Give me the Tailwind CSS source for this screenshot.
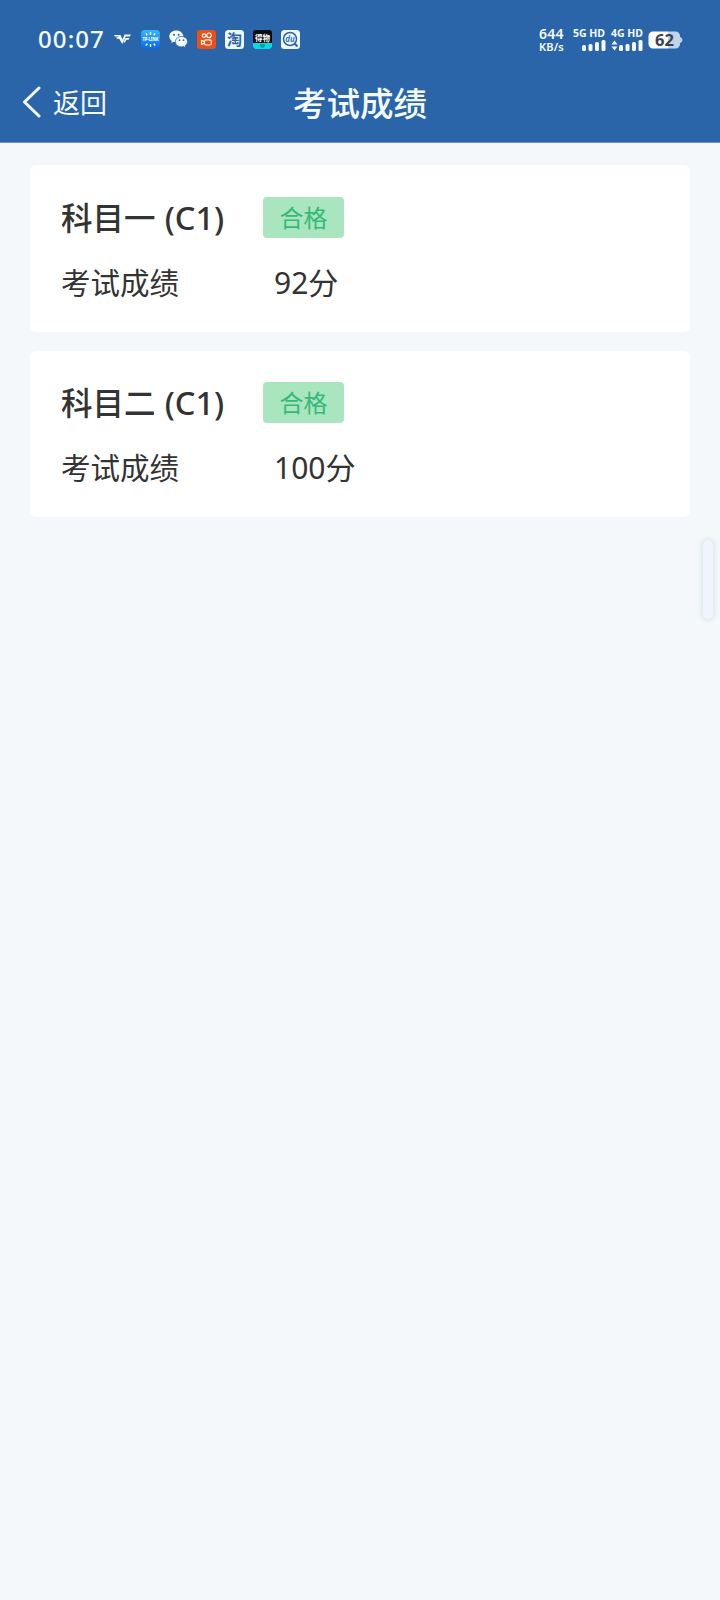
<!DOCTYPE html>
<html lang="zh-CN">
  <head>
    <meta charset="UTF-8" />
    <meta name="viewport" content="width=device-width, initial-scale=1.0" />
    <title>考试成绩</title>
    <script src="https://cdn.jsdelivr.net/npm/@tailwindcss/browser@4"></script>
  </head>
  <body
    class="min-h-screen bg-[#f4f8fa] font-['Noto_Sans','Noto_Sans_CJK_SC',sans-serif] text-[#333333]"
  >
    <!-- Header -->
    <header class="h-[143px] bg-[#2b65a9] text-[#f4fbff] border-b border-[#7093b5]">
      <!-- Status bar -->
      <div class="h-16 pt-[15px] pl-[37px] pr-[37px] flex justify-between">
        <div class="h-12 flex items-center">
          <span class="w-[68px] pl-px text-2xl font-medium tracking-[1.100px] whitespace-nowrap">00:07</span>
          <svg class="ml-[9px] w-[18px] h-3" viewBox="0 0 18 12" fill="currentColor">
            <path d="M0 2h6.500l2 4.500L10.500 1.500H17l-1.200 1.900h-4L8.200 11 5.200 5.700H3L2 4.200h2.500L4 3.500H1z" />
            <path d="M11.500 4.900h4l-1 1.800h-2.200L11 9.500H9.300z" />
          </svg>

          <div class="ml-[9px] flex gap-[9px]">
            <!-- TP-LINK -->
            <svg class="w-[19px] h-[19px] overflow-visible" viewBox="0 0 19 19">
              <defs>
                <linearGradient id="tp" x1="0" y1="0" x2="0" y2="1">
                  <stop offset="0" stop-color="#35b8fa" />
                  <stop offset="1" stop-color="#0865f0" />
                </linearGradient>
              </defs>
              <rect width="19" height="19" rx="4" fill="url(#tp)" />
              <path d="M9.500 2v3M9.500 14v3M4.800 3.500l1.500 1.800M14.200 3.500l-1.500 1.800M4.800 15.500l1.500-1.800M14.200 15.500l-1.500-1.800" stroke="#fff" stroke-width="1.400" />
              <text x="1.500" y="11.300" textLength="16" lengthAdjust="spacingAndGlyphs" font-size="4.800" font-weight="800" fill="#fff">TP-LINK</text>
            </svg>
            <!-- WeChat -->
            <svg class="w-[19px] h-[19px]" viewBox="0 0 19 19" fill="#f4fbff">
              <path d="M7.300.5C3.300.5.300 3.100.300 6.400c0 1.900 1 3.500 2.600 4.600L2.300 13l2.500-1.200c.8.200 1.600.4 2.500.4 4 0 7-2.600 7-5.800S11.300.5 7.300.5z" />
              <path d="M12.500 6.500c-3.400 0-6.100 2.300-6.100 5.200s2.700 5.200 6.100 5.200c.7 0 1.400-.1 2-.3l2.200 1.200-.6-1.900c1.500-1 2.500-2.500 2.500-4.200 0-2.900-2.700-5.200-6.100-5.200z" stroke="#2b65a9" stroke-width=".8" />
              <g fill="#2b65a9">
                <circle cx="5" cy="4.700" r="1" />
                <circle cx="9.600" cy="4.700" r="1" />
                <circle cx="10.500" cy="10.200" r=".9" />
                <circle cx="14.500" cy="10.200" r=".9" />
              </g>
            </svg>
            <!-- Kuaishou -->
            <svg class="w-[19px] h-[19px]" viewBox="0 0 19 19" fill="none" stroke="#fff" stroke-width="1.200">
              <rect width="19" height="19" rx="3" fill="#ef4f15" stroke="none" />
              <circle cx="7" cy="5.600" r="1.800" />
              <circle cx="12" cy="5.300" r="2.300" />
              <rect x="7.500" y="9.800" width="6.800" height="5.200" rx="1.500" />
              <path d="M7.500 11.800L4.500 10.300v4.200l3-1.500" stroke-linejoin="round" />
            </svg>
            <!-- Taobao -->
            <svg class="w-[19px] h-[19px] overflow-visible" viewBox="0 0 19 19">
              <rect width="19" height="19" rx="3.500" fill="#f0f8ff" />
              <text x="9.500" y="15" text-anchor="middle" font-size="15" font-weight="700" fill="#2b65a9">淘</text>
            </svg>
            <!-- Dewu -->
            <svg class="w-[19px] h-[19px] overflow-visible" viewBox="0 0 19 19">
              <rect width="19" height="19" rx="3" fill="#050b10" />
              <path d="M0 13h14l1-1.500L16 13h3v3a3 3 0 0 1-3 3H3a3 3 0 0 1-3-3z" fill="#08d9e5" />
              <text x="9.500" y="10.500" text-anchor="middle" font-size="7.500" font-weight="700" fill="#fff">得物</text>
              <path d="M7 15h5M8 17h3M8 15v2M11 15v2" stroke="#066" stroke-width=".8" />
            </svg>
            <!-- Search -->
            <svg class="w-[19px] h-[19px] overflow-visible" viewBox="0 0 19 19">
              <rect width="19" height="19" rx="3.500" fill="#f0f8ff" />
              <circle cx="9" cy="9" r="6.500" fill="none" stroke="#2b65a9" stroke-width="1.500" />
              <path d="M13.500 13.500l3 3" stroke="#2b65a9" stroke-width="2" />
              <text x="9" y="12" text-anchor="middle" font-size="8" font-style="italic" font-weight="600" fill="#2b65a9">du</text>
            </svg>
          </div>
        </div>

        <div class="h-[50px] flex items-center font-bold">
          <div class="w-[26px] mr-[9px] whitespace-nowrap">
            <div class="pl-px text-[14px] leading-[14px] font-semibold tracking-[0.300px]">644</div>
            <div class="pl-px text-[11px] leading-[12px] font-semibold tracking-[0.200px]">KB/s</div>
          </div>
          <div class="w-8 mr-[6px] -mt-[3px]">
            <div class="mb-px text-[10.500px] leading-3 whitespace-nowrap">5G HD</div>
            <svg class="ml-[9px] w-6 h-[11px]" viewBox="0 0 24 11" fill="currentColor">
              <rect x="0" y="5" width="4" height="6" rx="1.500" />
              <rect x="6.500" y="4" width="4" height="7" rx="1.500" />
              <rect x="13" y="2" width="4" height="9" rx="1.500" />
              <rect x="19.500" y="0" width="4" height="11" rx="1.500" />
            </svg>
          </div>
          <div class="w-8 mr-[5px] -mt-[3px]">
            <div class="mb-px text-[10.500px] leading-3 whitespace-nowrap">4G HD</div>
            <svg class="w-8 h-[11px]" viewBox="0 0 32 11" fill="currentColor">
              <path d="M3.500.5l3 4h-6zM3.500 10.500l3-4h-6z" />
              <rect x="8" y="5" width="4" height="6" rx="1.500" />
              <rect x="14.500" y="4" width="4" height="7" rx="1.500" />
              <rect x="21" y="2" width="4" height="9" rx="1.500" />
              <rect x="27.500" y="0" width="4" height="11" rx="1.500" />
            </svg>
          </div>
          <svg class="w-[35px] h-[18px] overflow-visible" viewBox="0 0 35 18">
            <path d="M5 .5h15v17H5a4.500 4.500 0 0 1-4.500-4.500V5A4.500 4.500 0 0 1 5 .5z" fill="#fff" />
            <path d="M20 .5h7.500A4.500 4.500 0 0 1 32 5v.8q2.500 1.200 2.500 3.200T32 12.200v.8a4.500 4.500 0 0 1-4.500 4.500H20z" fill="#c2d3eb" />
            <text x="16.500" y="15" text-anchor="middle" font-size="16.500" font-weight="700" fill="#3b424b">62</text>
          </svg>
        </div>
      </div>

      <!-- Nav bar -->
      <nav class="h-[77px] px-[22px] grid grid-cols-3 items-center">
        <a href="#" class="flex items-center text-[27px] leading-[40px]">
          <svg class="w-5 h-8 -mt-0.5 mr-[11px]" viewBox="0 0 20 32" fill="none" stroke="currentColor" stroke-width="3" stroke-linecap="round" stroke-linejoin="round">
            <path d="M17 2L2.500 16 17 30" />
          </svg>
          返回
        </a>
        <h1 class="text-center text-[33.500px] leading-[44px] font-medium">考试成绩</h1>
      </nav>
    </header>

    <!-- Results -->
    <main class="px-[30px] pt-[22.400px] space-y-[19px]">
      <section class="h-[166.400px] rounded-md bg-white pl-[31px] pt-[31.500px]">
        <div class="flex items-center h-[41px]">
          <h2 class="w-[202px] text-[31.500px] leading-[41px] font-medium whitespace-nowrap">科目一 <span class="pl-px text-[32.500px]">(C1)</span></h2>
          <span class="w-[81px] h-[41px] rounded bg-[#a9e6bf] text-[#35b979] text-2xl leading-[41px] text-center">合格</span>
        </div>
        <div class="mt-[25px] flex items-center h-10 text-[30px] leading-10">
          <span class="w-[213px] text-[29.500px]">考试成绩</span>
          <span>92分</span>
        </div>
      </section>

      <section class="h-[166.400px] rounded-md bg-white pl-[31px] pt-[31.500px]">
        <div class="flex items-center h-[41px]">
          <h2 class="w-[202px] text-[31.500px] leading-[41px] font-medium whitespace-nowrap">科目二 <span class="pl-px text-[32.500px]">(C1)</span></h2>
          <span class="w-[81px] h-[41px] rounded bg-[#a9e6bf] text-[#35b979] text-2xl leading-[41px] text-center">合格</span>
        </div>
        <div class="mt-[25px] flex items-center h-10 text-[30px] leading-10">
          <span class="w-[213px] text-[29.500px]">考试成绩</span>
          <span>100分</span>
        </div>
      </section>
    </main>

    <!-- Edge handle -->
    <div class="absolute left-[703px] top-[540px] w-[10px] h-[79px] rounded-full bg-[#eff4ff] shadow-[0_0_4px_2px_#e0e8ea]"></div>
  </body>
</html>
